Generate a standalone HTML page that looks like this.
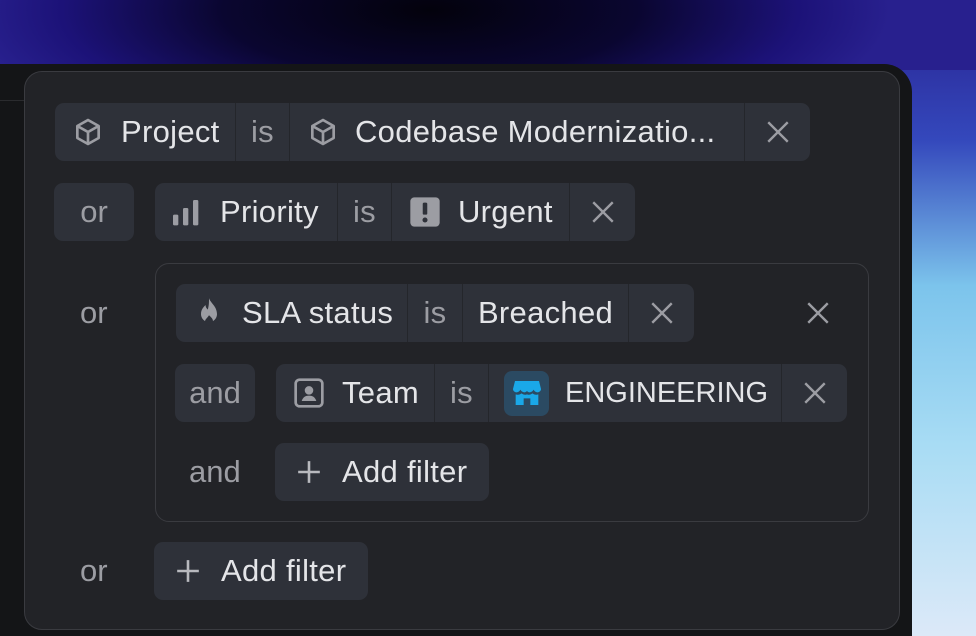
<!DOCTYPE html>
<html><head><meta charset="utf-8"><style>
*{margin:0;padding:0;box-sizing:border-box}
html,body{width:976px;height:636px;overflow:hidden}
body{position:relative;font-family:"Liberation Sans",sans-serif;
background:linear-gradient(180deg,#28208e 0%,#3448bc 22%,#7cc4ec 45%,#a8dcf4 70%,#dce9f8 100%);}
.top{position:absolute;left:0;top:0;width:976px;height:70px;background:radial-gradient(ellipse 460px 150px at 430px 10px,#03020c 0%,#0a0630 45%,#1c1278 80%,#28208e 100%);}
.win{position:absolute;left:0;top:64px;width:912px;height:572px;background:#141517;border-top-right-radius:28px;}
.hl{position:absolute;left:0;top:100px;width:30px;height:1px;background:#2a2b2e}
.pop{position:absolute;left:24px;top:71px;width:876px;height:559px;background:#222327;border:1px solid #3a3b40;border-radius:18px;}
.chip{position:absolute;height:58px;background:#2e3139;border-radius:9px;display:flex;overflow:hidden}
.seg{height:58px;display:flex;align-items:center;font-size:31px;letter-spacing:0.3px;color:#e4e5e8;border-right:1px solid #24262b;white-space:nowrap;overflow:hidden}
.seg:last-child{border-right:none}
.g{color:#9c9da3}
.t{position:absolute;font-size:31px;color:#9c9da3;height:58px;display:flex;align-items:center}
.box{position:absolute;height:58px;background:#2e3139;border-radius:9px;font-size:31px;color:#9c9da3;display:flex;align-items:center;justify-content:center}
.grp{position:absolute;left:155px;top:263px;width:714px;height:259px;border:1px solid #3a3b40;border-radius:14px}
svg{display:block;flex:none}
</style></head><body>
<div class="top"></div>
<div class="win"></div><div class="hl"></div>
<div class="pop"></div>

<div class="chip" style="left:55px;top:103px">
 <div class="seg" style="width:181px;padding-left:17px"><svg width="32" height="32" viewBox="0 0 24 24" fill="none" stroke="#9c9da3" stroke-width="2" stroke-linejoin="round"><path d="M12 3l8 4.5v9L12 21l-8-4.5v-9z"/><path d="M4 7.5l8 4.5 8-4.5M12 12v9"/></svg><span style="margin-left:17px">Project</span></div>
 <div class="seg g" style="width:54px;justify-content:center">is</div>
 <div class="seg" style="width:455px;padding-left:17px"><svg width="32" height="32" viewBox="0 0 24 24" fill="none" stroke="#9c9da3" stroke-width="2" stroke-linejoin="round"><path d="M12 3l8 4.5v9L12 21l-8-4.5v-9z"/><path d="M4 7.5l8 4.5 8-4.5M12 12v9"/></svg><span style="margin-left:16px">Codebase Modernizatio...</span></div>
 <div class="seg g" style="width:65px;justify-content:center"><svg width="26" height="26" viewBox="0 0 24 24" stroke="#9c9da3" stroke-width="2.2"><path d="M3 3L21 21M21 3L3 21"/></svg></div>
</div>

<div class="box" style="left:54px;top:183px;width:80px">or</div>
<div class="chip" style="left:155px;top:183px">
 <div class="seg" style="width:183px;padding-left:16px"><svg width="32" height="32" viewBox="0 0 24 24" fill="#9c9da3"><rect x="1.5" y="14" width="4" height="8" rx="1"/><rect x="9" y="9" width="4" height="13" rx="1"/><rect x="16.5" y="3" width="4" height="19" rx="1"/></svg><span style="margin-left:17px">Priority</span></div>
 <div class="seg g" style="width:54px;justify-content:center">is</div>
 <div class="seg" style="width:178px;padding-left:17px"><svg width="32" height="32" viewBox="0 0 24 24"><rect x="1" y="1" width="22" height="22" rx="3" fill="#9c9da3"/><rect x="10.3" y="5" width="3.4" height="9" rx="1" fill="#2e3139"/><circle cx="12" cy="18" r="1.9" fill="#2e3139"/></svg><span style="margin-left:17px">Urgent</span></div>
 <div class="seg g" style="width:65px;justify-content:center"><svg width="26" height="26" viewBox="0 0 24 24" stroke="#9c9da3" stroke-width="2.2"><path d="M3 3L21 21M21 3L3 21"/></svg></div>
</div>

<div class="t" style="left:80px;top:284px">or</div>
<div class="grp"></div>
<div class="chip" style="left:176px;top:284px">
 <div class="seg" style="width:232px;padding-left:19px"><svg width="28" height="32" viewBox="0 0 24 28"><path d="M12 1c1 4 7 7 7 14a7 7 0 0 1-14 0c0-4 2-6 4-8 0 2 1 3 2 4 1-4 1-6 1-10z" fill="#9c9da3"/><path d="M12 16c2 2 3.5 3 3.5 5.5a3.5 3.5 0 0 1-7 0c0-2 2-3 3.5-5.5z" fill="#2e3139"/></svg><span style="margin-left:19px">SLA status</span></div>
 <div class="seg g" style="width:55px;justify-content:center">is</div>
 <div class="seg" style="width:166px;justify-content:center">Breached</div>
 <div class="seg g" style="width:65px;justify-content:center"><svg width="26" height="26" viewBox="0 0 24 24" stroke="#9c9da3" stroke-width="2.2"><path d="M3 3L21 21M21 3L3 21"/></svg></div>
</div>
<div style="position:absolute;left:805px;top:300px"><svg width="26" height="26" viewBox="0 0 24 24" stroke="#9c9da3" stroke-width="2.2"><path d="M3 3L21 21M21 3L3 21"/></svg></div>

<div class="box" style="left:175px;top:364px;width:80px">and</div>
<div class="chip" style="left:276px;top:364px">
 <div class="seg" style="width:159px;padding-left:17px"><svg width="32" height="32" viewBox="0 0 24 24" fill="none" stroke="#9c9da3" stroke-width="2"><rect x="2" y="2" width="20" height="20" rx="3"/><circle cx="12" cy="10" r="3.2" fill="#9c9da3" stroke="none"/><path d="M6.5 18c1-3 3-4 5.5-4s4.5 1 5.5 4z" fill="#9c9da3" stroke="none"/></svg><span style="margin-left:17px">Team</span></div>
 <div class="seg g" style="width:54px;justify-content:center">is</div>
 <div class="seg" style="width:293px;padding-left:15px"><div style="flex:none;width:45px;height:45px;background:#2b4a62;border-radius:8px;display:flex;align-items:center;justify-content:center"><svg width="32" height="32" viewBox="0 0 24 24" fill="#1aa8e8"><path d="M3 3h18l1.5 6c0 1.5-1.3 2.5-2.7 2.5S17.4 10.5 17 9.5c-.5 1-1.7 2-3 2s-2-1-2-1-.8 1-2 1-2.5-1-3-2c-.4 1-1.4 2-2.8 2S1.5 10.5 1.5 9z"/><path d="M3.5 13c.5.2 1 .3 1.7.3 1 0 2-.4 2.7-1 .8.6 1.7 1 2.7 1 .6 0 1-.1 1.4-.3.4.2.8.3 1.4.3 1 0 2-.4 2.7-1 .7.6 1.7 1 2.7 1 .7 0 1.2-.1 1.7-.3V21h-6v-5h-5v5h-6z"/></svg></div><span style="margin-left:16px;letter-spacing:0;font-size:29px">ENGINEERING</span></div>
 <div class="seg g" style="width:65px;justify-content:center"><svg width="26" height="26" viewBox="0 0 24 24" stroke="#9c9da3" stroke-width="2.2"><path d="M3 3L21 21M21 3L3 21"/></svg></div>
</div>

<div class="t" style="left:189px;top:443px">and</div>
<div class="chip" style="left:275px;top:443px;width:214px">
 <div class="seg" style="padding-left:21px"><svg width="26" height="26" viewBox="0 0 24 24" stroke="#b8b9be" stroke-width="2.4"><path d="M12 2v20M2 12h20"/></svg><span style="margin-left:20px">Add filter</span></div>
</div>

<div class="t" style="left:80px;top:542px">or</div>
<div class="chip" style="left:154px;top:542px;width:214px">
 <div class="seg" style="padding-left:21px"><svg width="26" height="26" viewBox="0 0 24 24" stroke="#b8b9be" stroke-width="2.4"><path d="M12 2v20M2 12h20"/></svg><span style="margin-left:20px">Add filter</span></div>
</div>
</body></html>
